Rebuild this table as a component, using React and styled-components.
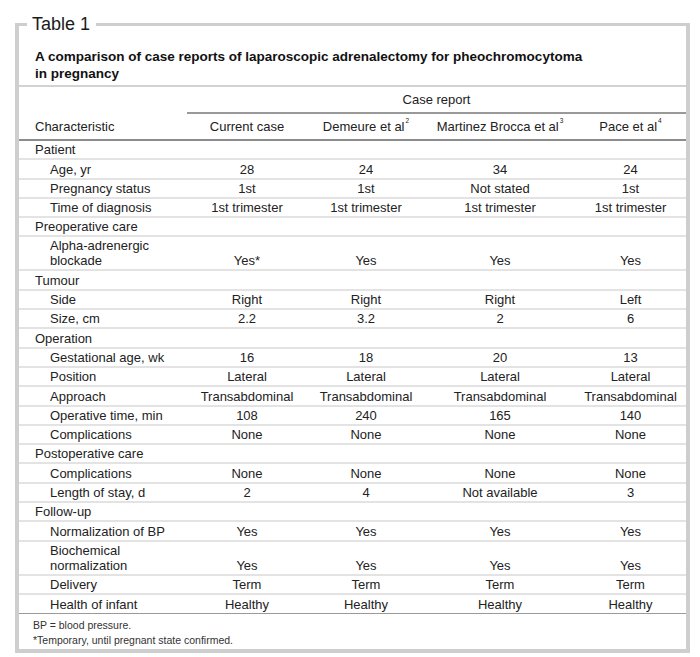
import React from 'react'
import styled, { createGlobalStyle } from 'styled-components'

const GlobalStyle = createGlobalStyle`
  html, body {
    margin: 0;
    padding: 0;
    background: #fff;
  }
  body {
    font-family: "Liberation Sans", Arial, sans-serif;
    color: #222;
  }
`

// data for the body of the table
const sections = [
  {
    title: 'Patient',
    rows: [
      ['Age, yr', '28', '24', '34', '24'],
      ['Pregnancy status', '1st', '1st', 'Not stated', '1st'],
      ['Time of diagnosis', '1st trimester', '1st trimester', '1st trimester', '1st trimester'],
    ],
  },
  {
    title: 'Preoperative care',
    rows: [['Alpha-adrenergic blockade', 'Yes*', 'Yes', 'Yes', 'Yes', true]],
  },
  {
    title: 'Tumour',
    rows: [
      ['Side', 'Right', 'Right', 'Right', 'Left'],
      ['Size, cm', '2.2', '3.2', '2', '6'],
    ],
  },
  {
    title: 'Operation',
    rows: [
      ['Gestational age, wk', '16', '18', '20', '13'],
      ['Position', 'Lateral', 'Lateral', 'Lateral', 'Lateral'],
      ['Approach', 'Transabdominal', 'Transabdominal', 'Transabdominal', 'Transabdominal'],
      ['Operative time, min', '108', '240', '165', '140'],
      ['Complications', 'None', 'None', 'None', 'None'],
    ],
  },
  {
    title: 'Postoperative care',
    rows: [
      ['Complications', 'None', 'None', 'None', 'None'],
      ['Length of stay, d', '2', '4', 'Not available', '3'],
    ],
  },
  {
    title: 'Follow-up',
    rows: [
      ['Normalization of BP', 'Yes', 'Yes', 'Yes', 'Yes'],
      ['Biochemical normalization', 'Yes', 'Yes', 'Yes', 'Yes', true],
      ['Delivery', 'Term', 'Term', 'Term', 'Term'],
      ['Health of infant', 'Healthy', 'Healthy', 'Healthy', 'Healthy'],
    ],
  },
]

export default function App() {
  return (
    <>
      <GlobalStyle />
      <Page>
        <Frame>
          <Legend>Table 1</Legend>
          <Caption>
            A comparison of case reports of laparoscopic adrenalectomy for pheochromocytoma
            in pregnancy
          </Caption>
          <Table>
            <colgroup>
              <col style={{ width: 168 }} />
              <col style={{ width: 120 }} />
              <col style={{ width: 118 }} />
              <col style={{ width: 150 }} />
              <col />
            </colgroup>
            <thead>
              <tr>
                <HeadCell $top />
                <SpanCell colSpan={4}>Case report</SpanCell>
              </tr>
              <tr>
                <HeadCell $left>Characteristic</HeadCell>
                <HeadCell>Current case</HeadCell>
                <HeadCell>Demeure et al<sup>2</sup></HeadCell>
                <HeadCell>Martinez Brocca et al<sup>3</sup></HeadCell>
                <HeadCell>Pace et al<sup>4</sup></HeadCell>
              </tr>
            </thead>
            <tbody>
              {sections.map((s) => (
                <React.Fragment key={s.title}>
                  <Row>
                    <Label>{s.title}</Label>
                    <Value />
                    <Value />
                    <Value />
                    <Value />
                  </Row>
                  {s.rows.map((r, i) => (
                    <Row key={i} $tall={r[5]} $last={s.title === 'Follow-up' && i === s.rows.length - 1}>
                      <Label $sub>{r[0]}</Label>
                      <Value>{r[1]}</Value>
                      <Value>{r[2]}</Value>
                      <Value>{r[3]}</Value>
                      <Value>{r[4]}</Value>
                    </Row>
                  ))}
                </React.Fragment>
              ))}
            </tbody>
          </Table>
          <Notes>
            <p>BP = blood pressure.</p>
            <p>*Temporary, until pregnant state confirmed.</p>
          </Notes>
        </Frame>
      </Page>
    </>
  )
}

const Page = styled.div`
  width: 700px;
  padding: 14px 0 0 15px;
  box-sizing: border-box;
`

const Frame = styled.fieldset`
  margin: 0;
  padding: 0 0 1px 0;
  width: 675px;
  box-sizing: border-box;
  border: 4px solid #cecece;
  border-top-width: 3px;
`

const Legend = styled.legend`
  margin-left: 8px;
  padding: 0 6px 0 5px;
  font-size: 18px;
  font-weight: 500;
  color: #1a1a1a;
  line-height: 20px;
`

const Caption = styled.div`
  padding: 14px 100px 3px 16px;
  font-size: 13.5px;
  font-weight: bold;
  line-height: 17px;
  color: #111;
  border-bottom: 2px solid #d2d2d2;
`

const Table = styled.table`
  width: 100%;
  border-collapse: collapse;
  table-layout: fixed;
  font-size: 13px;

  sup {
    font-size: 6.5px;
    vertical-align: top;
    position: relative;
    top: -2px;
    margin-left: 1px;
  }
`

const HeadCell = styled.th`
  font-weight: normal;
  text-align: ${(p) => (p.$left ? 'left' : 'center')};
  padding: 0 0 0 ${(p) => (p.$left ? '16px' : '0')};
  height: 25px;
  border-bottom: ${(p) => (p.$top ? 'none' : '2px solid #8c8c8c')};
  white-space: nowrap;
`

const SpanCell = styled.th`
  font-weight: normal;
  text-align: center;
  height: 25px;
  padding: 0;
  border-bottom: 2px solid #999;
`

const Row = styled.tr`
  height: ${(p) => (p.$tall ? '34px' : '19.3px')};
  border-bottom: ${(p) => (p.$last ? '1px solid #9a9a9a' : '2px solid #e3e3e3')};
`

const Label = styled.td`
  padding: 0 0 1px ${(p) => (p.$sub ? '31px' : '16px')};
  line-height: 15px;
  vertical-align: bottom;
  text-align: left;
`

const Value = styled.td`
  padding: 0 0 1px;
  line-height: 15px;
  text-align: center;
  vertical-align: bottom;
  white-space: nowrap;
`

const Notes = styled.div`
  padding: 4px 0 0 14px;
  font-size: 10.5px;
  line-height: 15px;
  color: #333;

  p {
    margin: 0;
  }
`
